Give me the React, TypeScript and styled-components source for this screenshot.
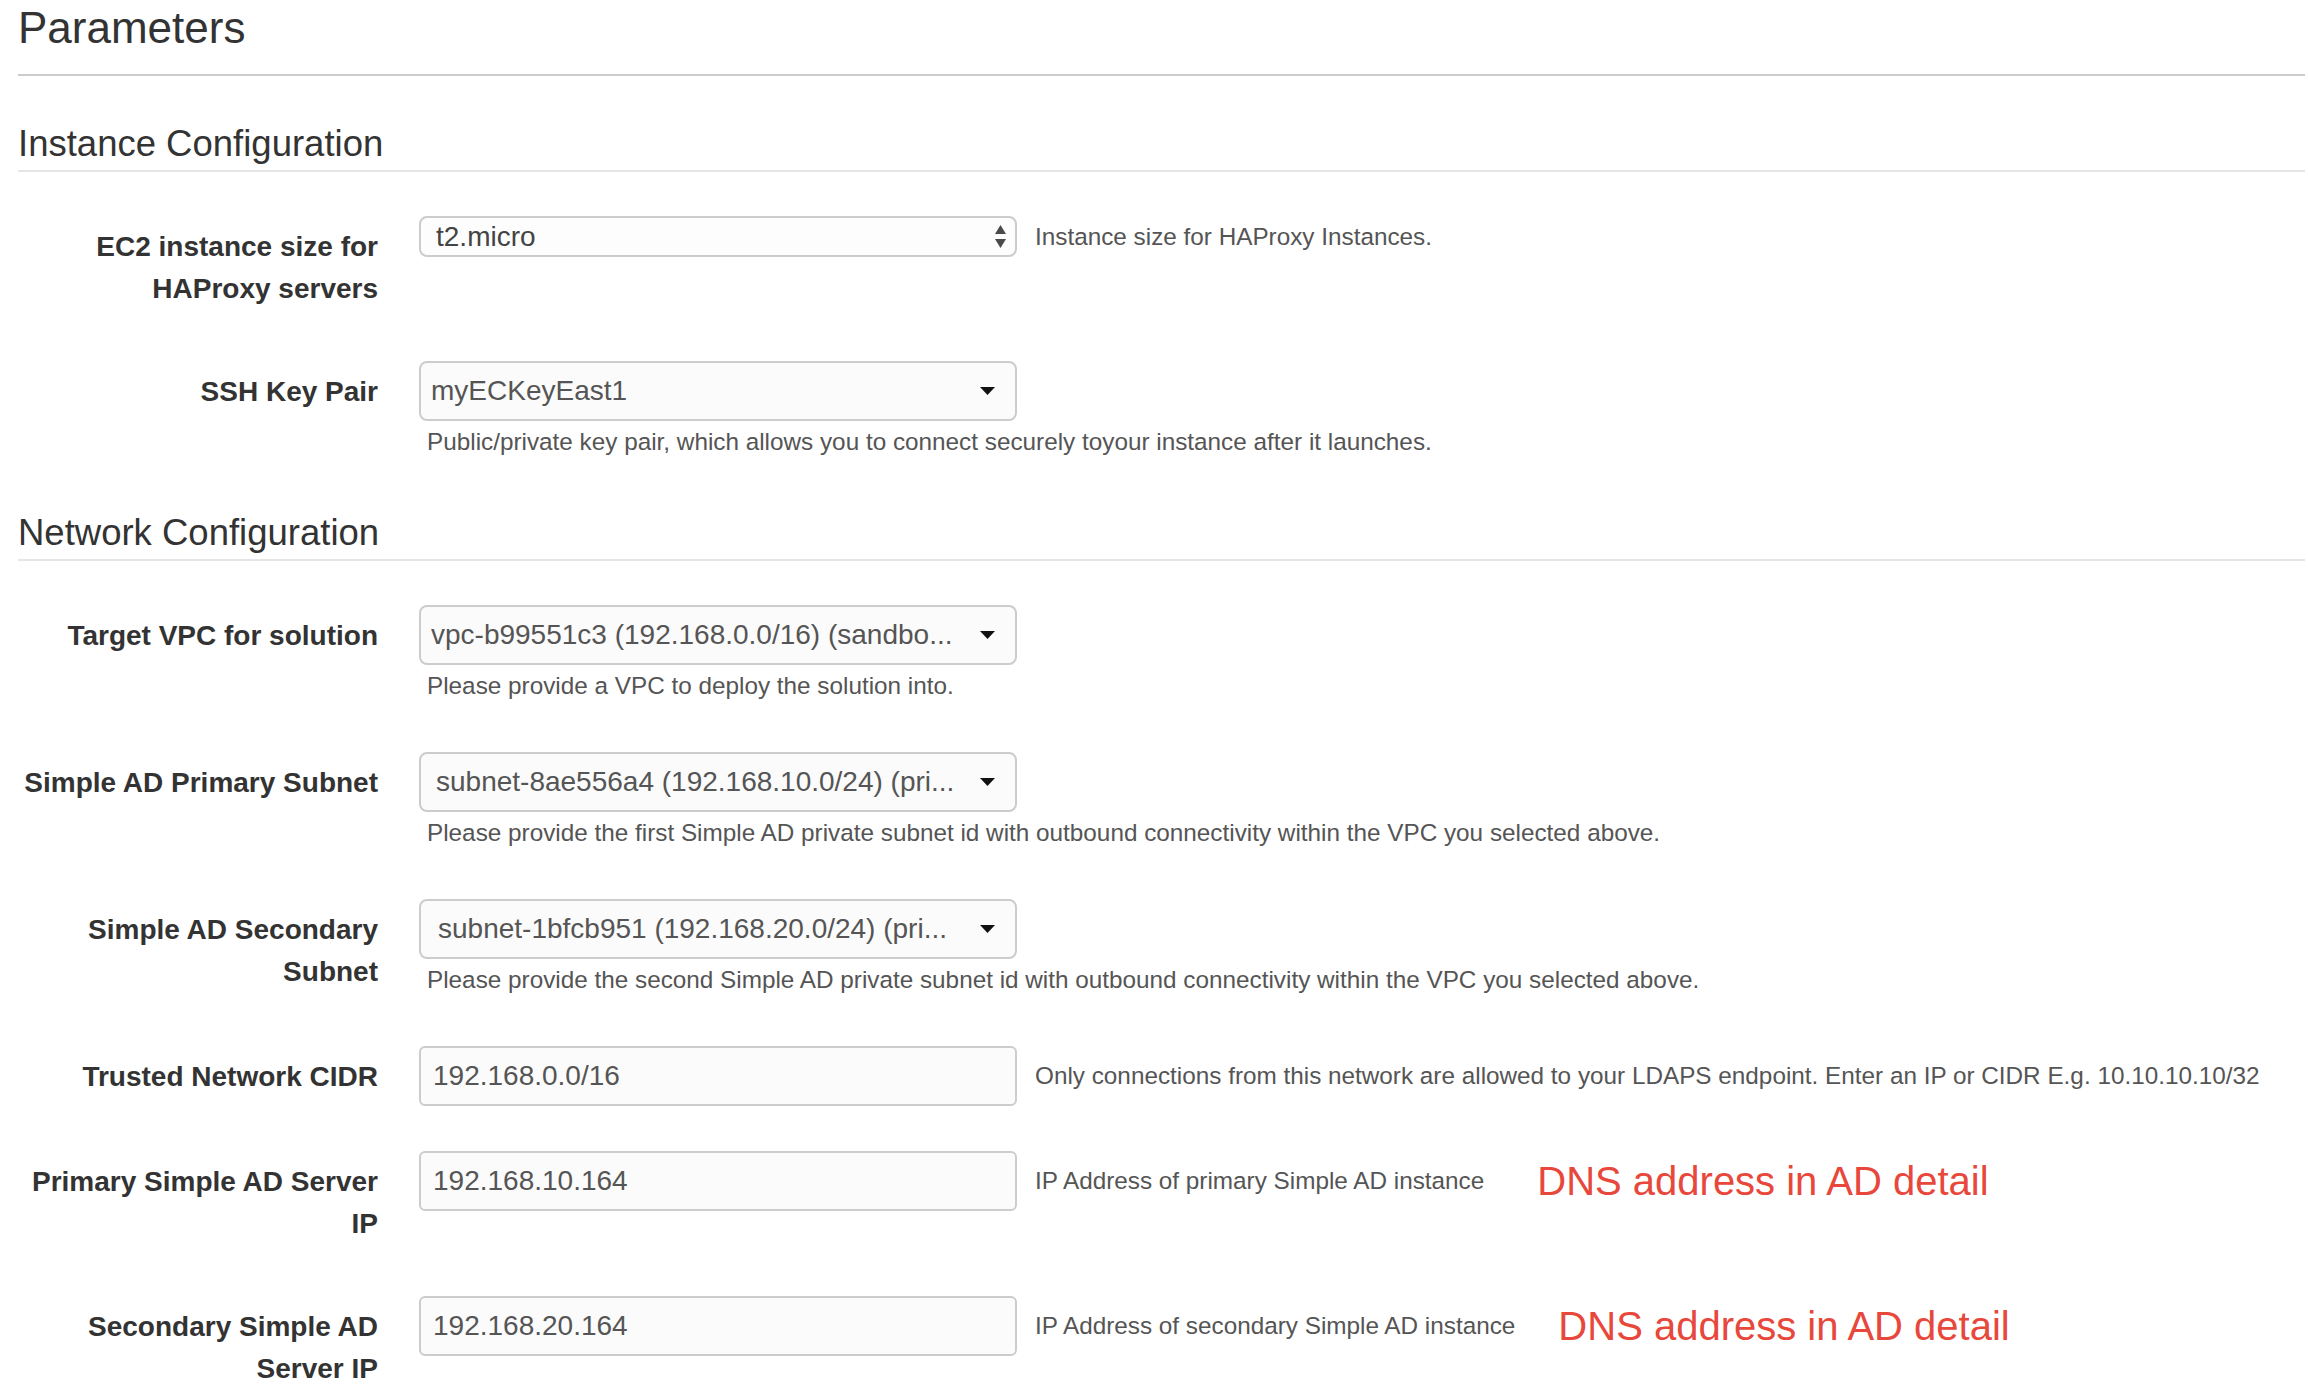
import React from "react";
import styled, { createGlobalStyle } from "styled-components";

const GlobalStyle = createGlobalStyle`
  html, body {
    margin: 0;
    padding: 0;
    background: #ffffff;
  }
  body {
    font-family: "Liberation Sans", Arial, Helvetica, sans-serif;
    color: #333333;
  }
`;

const Page = styled.div`
  width: 2308px;
  box-sizing: border-box;
  padding: 0 3px 0 18px;
`;

const Title = styled.h2`
  margin: 0;
  padding: 4px 0 22px;
  font-size: 44px;
  line-height: 48px;
  font-weight: 400;
  color: #333333;
  border-bottom: 2px solid #cccccc;
`;

const Section = styled.section<{ $top: number }>`
  margin-top: ${(p) => p.$top}px;
`;

const SectionTitle = styled.h3`
  margin: 0;
  padding-bottom: 6px;
  font-size: 36.5px;
  line-height: 40px;
  font-weight: 400;
  color: #333333;
  border-bottom: 2px solid #e5e5e5;
`;

const Rows = styled.div`
  display: flex;
  flex-direction: column;
  margin-top: 44px;
`;

const Row = styled.div<{ $after?: number }>`
  display: grid;
  grid-template-columns: 360px 1fr;
  column-gap: 41px;
  align-items: start;
  margin-bottom: ${(p) => p.$after ?? 48}px;

  &:last-child {
    margin-bottom: 0;
  }
`;

const Label = styled.label`
  padding: 10px 0 4px;
  text-align: right;
  font-size: 28px;
  line-height: 42px;
  font-weight: 700;
  color: #333333;
`;

const Field = styled.div`
  display: flex;
  flex-direction: column;
  align-items: flex-start;
`;

const ControlLine = styled.div`
  display: flex;
  align-items: center;
`;

const Help = styled.div<{ $inline?: boolean }>`
  margin: ${(p) => (p.$inline ? "0 0 0 18px" : "4px 0 0 8px")};
  font-size: 24.3px;
  line-height: 34px;
  color: #555555;
  white-space: nowrap;
`;

const Note = styled.span<{ $gap: number }>`
  margin-left: ${(p) => p.$gap}px;
  font-size: 40px;
  line-height: 44px;
  color: #e8473b;
  white-space: nowrap;
`;

const SelectBox = styled.div<{ $pad: number }>`
  width: 598px;
  height: 60px;
  box-sizing: border-box;
  display: flex;
  align-items: center;
  justify-content: space-between;
  padding: 0 20px 0 ${(p) => p.$pad}px;
  border: 2px solid #cccccc;
  border-radius: 8px;
  background: #fbfbfb;
  font-size: 28px;
  color: #555555;
`;

const NativeSelect = styled.div`
  width: 598px;
  height: 41px;
  box-sizing: border-box;
  display: flex;
  align-items: center;
  justify-content: space-between;
  padding: 0 9px 0 15px;
  border: 2px solid #cccccc;
  border-radius: 8px;
  background: #fdfdfd;
  font-size: 28px;
  color: #444444;
`;

const ValueText = styled.span`
  white-space: nowrap;
  overflow: hidden;
`;

const TextInput = styled.div`
  width: 598px;
  height: 60px;
  box-sizing: border-box;
  display: flex;
  align-items: center;
  padding: 0 12px;
  border: 2px solid #cccccc;
  border-radius: 6px;
  background: #fbfbfb;
  font-size: 28px;
  color: #555555;
`;

const Caret = () => (
  <svg width="15" height="8" viewBox="0 0 15 8">
    <polygon points="0,0 15,0 7.5,8" fill="#111111" />
  </svg>
);

const UpDown = () => (
  <svg width="11" height="23" viewBox="0 0 11 23">
    <polygon points="5.5,0 11,9 0,9" fill="#4a4a4a" />
    <polygon points="0,14 11,14 5.5,23" fill="#4a4a4a" />
  </svg>
);

type SelectProps = { value: string; pad?: number };

const Select = ({ value, pad = 10 }: SelectProps) => (
  <SelectBox $pad={pad}>
    <ValueText>{value}</ValueText>
    <Caret />
  </SelectBox>
);

export default function App() {
  return (
    <>
      <GlobalStyle />
      <Page>
        <Title>Parameters</Title>

        <Section $top={48}>
          <SectionTitle>Instance Configuration</SectionTitle>
          <Rows>
            <Row $after={47}>
              <Label>EC2 instance size for HAProxy servers</Label>
              <Field>
                <ControlLine>
                  <NativeSelect>
                    <ValueText>t2.micro</ValueText>
                    <UpDown />
                  </NativeSelect>
                  <Help $inline>Instance size for HAProxy Instances.</Help>
                </ControlLine>
              </Field>
            </Row>
            <Row>
              <Label>SSH Key Pair</Label>
              <Field>
                <Select value="myECKeyEast1" />
                <Help>
                  Public/private key pair, which allows you to connect securely toyour instance after it launches.
                </Help>
              </Field>
            </Row>
          </Rows>
        </Section>

        <Section $top={54}>
          <SectionTitle>Network Configuration</SectionTitle>
          <Rows>
            <Row $after={49}>
              <Label>Target VPC for solution</Label>
              <Field>
                <Select value="vpc-b99551c3 (192.168.0.0/16) (sandbo..." />
                <Help>Please provide a VPC to deploy the solution into.</Help>
              </Field>
            </Row>
            <Row $after={49}>
              <Label>Simple AD Primary Subnet</Label>
              <Field>
                <Select value="subnet-8ae556a4 (192.168.10.0/24) (pri..." pad={15} />
                <Help>
                  Please provide the first Simple AD private subnet id with outbound connectivity within the VPC you selected above.
                </Help>
              </Field>
            </Row>
            <Row $after={49}>
              <Label>Simple AD Secondary Subnet</Label>
              <Field>
                <Select value="subnet-1bfcb951 (192.168.20.0/24) (pri..." pad={17} />
                <Help>
                  Please provide the second Simple AD private subnet id with outbound connectivity within the VPC you selected above.
                </Help>
              </Field>
            </Row>
            <Row $after={45}>
              <Label>Trusted Network CIDR</Label>
              <Field>
                <ControlLine>
                  <TextInput>192.168.0.0/16</TextInput>
                  <Help $inline>
                    Only connections from this network are allowed to your LDAPS endpoint. Enter an IP or CIDR E.g. 10.10.10.10/32
                  </Help>
                </ControlLine>
              </Field>
            </Row>
            <Row $after={47}>
              <Label>Primary Simple AD Server IP</Label>
              <Field>
                <ControlLine>
                  <TextInput>192.168.10.164</TextInput>
                  <Help $inline>IP Address of primary Simple AD instance</Help>
                  <Note $gap={53}>DNS address in AD detail</Note>
                </ControlLine>
              </Field>
            </Row>
            <Row>
              <Label>Secondary Simple AD Server IP</Label>
              <Field>
                <ControlLine>
                  <TextInput>192.168.20.164</TextInput>
                  <Help $inline>IP Address of secondary Simple AD instance</Help>
                  <Note $gap={43}>DNS address in AD detail</Note>
                </ControlLine>
              </Field>
            </Row>
          </Rows>
        </Section>
      </Page>
    </>
  );
}
